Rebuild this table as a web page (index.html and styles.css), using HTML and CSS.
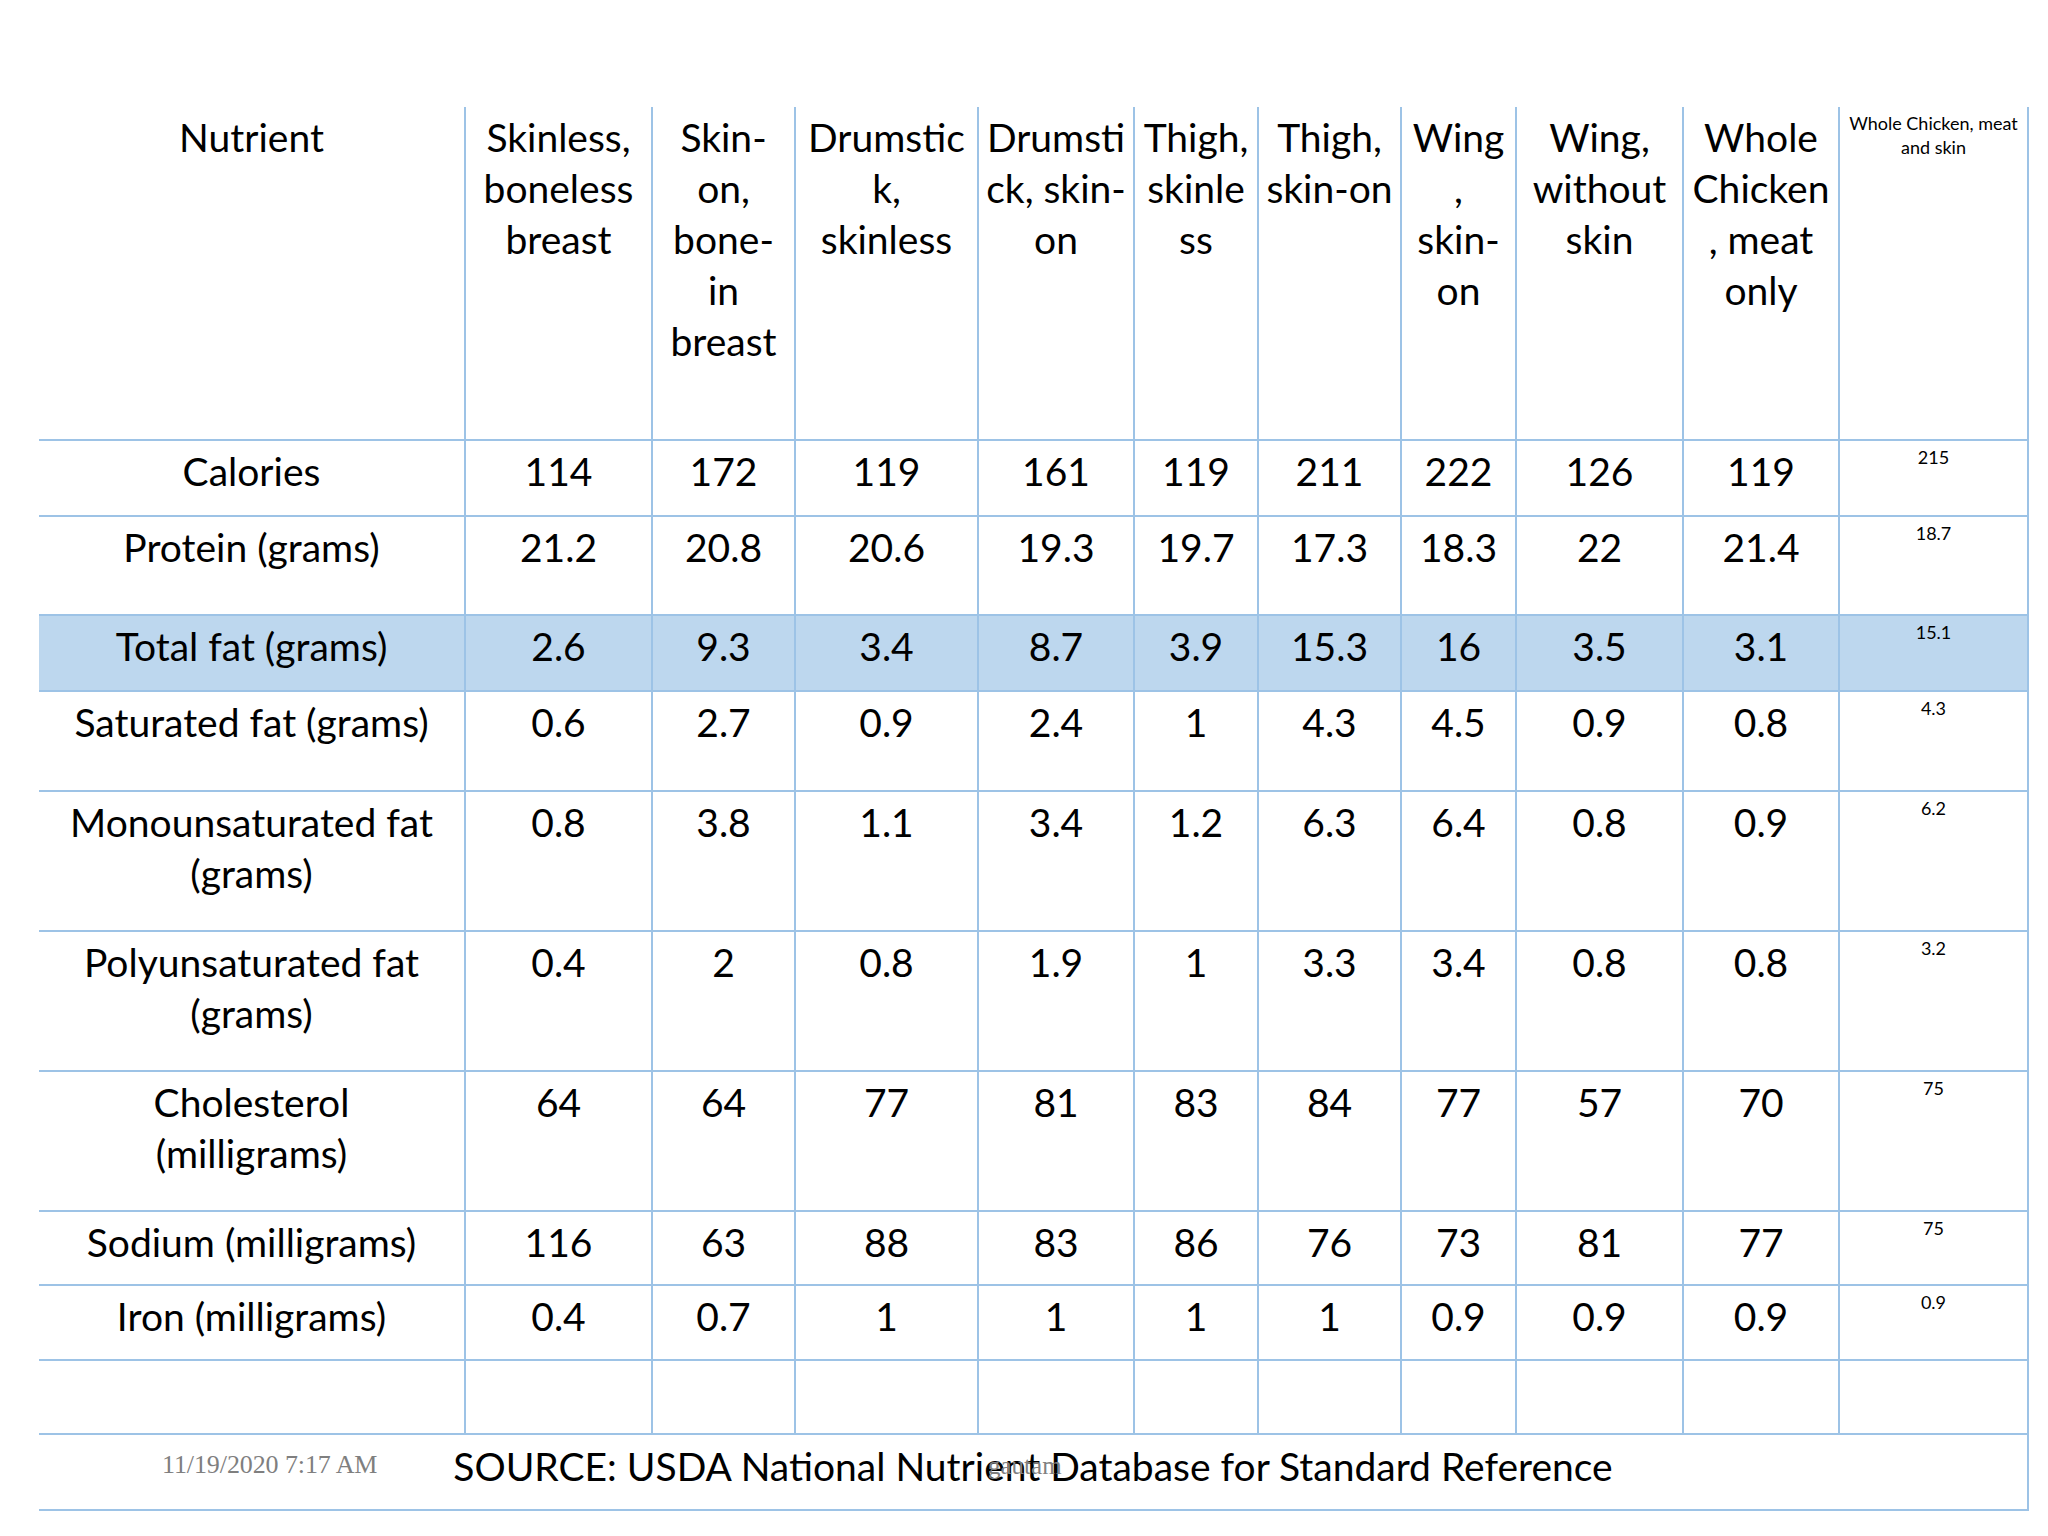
FILE: index.html
```html
<!DOCTYPE html>
<html lang="en">
<head>
<meta charset="utf-8">
<title>Chicken nutrient comparison</title>
<link rel="stylesheet" href="styles.css">
</head>
<body>
<div class="slide">
  <table class="nutri">
    <colgroup>
      <col class="c1"><col class="c2"><col class="c3"><col class="c4"><col class="c5"><col class="c6"><col class="c7"><col class="c8"><col class="c9"><col class="c10"><col class="c11">
    </colgroup>
    <thead>
      <tr class="r-head">
        <th>Nutrient</th>
        <th>Skinless,<br>boneless<br>breast</th>
        <th>Skin-<br>on,<br>bone-<br>in<br>breast</th>
        <th>Drumstic<br>k,<br>skinless</th>
        <th>Drumsti<br>ck, skin-<br>on</th>
        <th>Thigh,<br>skinle<br>ss</th>
        <th>Thigh,<br>skin-on</th>
        <th>Wing<br>,<br>skin-<br>on</th>
        <th>Wing,<br>without<br>skin</th>
        <th>Whole<br>Chicken<br>, meat<br>only</th>
        <th class="small">Whole Chicken, meat<br>and skin</th>
      </tr>
    </thead>
    <tbody>
      <tr class="r76">
        <td>Calories</td><td>114</td><td>172</td><td>119</td><td>161</td><td>119</td><td>211</td><td>222</td><td>126</td><td>119</td><td class="small">215</td>
      </tr>
      <tr class="r99">
        <td>Protein (grams)</td><td>21.2</td><td>20.8</td><td>20.6</td><td>19.3</td><td>19.7</td><td>17.3</td><td>18.3</td><td>22</td><td>21.4</td><td class="small">18.7</td>
      </tr>
      <tr class="r76 hl">
        <td>Total fat (grams)</td><td>2.6</td><td>9.3</td><td>3.4</td><td>8.7</td><td>3.9</td><td>15.3</td><td>16</td><td>3.5</td><td>3.1</td><td class="small">15.1</td>
      </tr>
      <tr class="r100">
        <td>Saturated fat (grams)</td><td>0.6</td><td>2.7</td><td>0.9</td><td>2.4</td><td>1</td><td>4.3</td><td>4.5</td><td>0.9</td><td>0.8</td><td class="small">4.3</td>
      </tr>
      <tr class="r140">
        <td>Monounsaturated fat<br>(grams)</td><td>0.8</td><td>3.8</td><td>1.1</td><td>3.4</td><td>1.2</td><td>6.3</td><td>6.4</td><td>0.8</td><td>0.9</td><td class="small">6.2</td>
      </tr>
      <tr class="r140">
        <td>Polyunsaturated fat<br>(grams)</td><td>0.4</td><td>2</td><td>0.8</td><td>1.9</td><td>1</td><td>3.3</td><td>3.4</td><td>0.8</td><td>0.8</td><td class="small">3.2</td>
      </tr>
      <tr class="r140">
        <td>Cholesterol<br>(milligrams)</td><td>64</td><td>64</td><td>77</td><td>81</td><td>83</td><td>84</td><td>77</td><td>57</td><td>70</td><td class="small">75</td>
      </tr>
      <tr class="r74">
        <td>Sodium (milligrams)</td><td>116</td><td>63</td><td>88</td><td>83</td><td>86</td><td>76</td><td>73</td><td>81</td><td>77</td><td class="small">75</td>
      </tr>
      <tr class="r75">
        <td>Iron (milligrams)</td><td>0.4</td><td>0.7</td><td>1</td><td>1</td><td>1</td><td>1</td><td>0.9</td><td>0.9</td><td>0.9</td><td class="small">0.9</td>
      </tr>
      <tr class="r74">
        <td></td><td></td><td></td><td></td><td></td><td></td><td></td><td></td><td></td><td></td><td></td>
      </tr>
    </tbody>
    <tfoot>
      <tr class="r76">
        <td class="source" colspan="11">SOURCE: USDA National Nutrient Database for Standard Reference</td>
      </tr>
    </tfoot>
  </table>
  <div class="stamp date">11/19/2020 7:17 AM</div>
  <div class="stamp author">gautam</div>
</div>
</body>
</html>
```

FILE: styles.css
```css
html, body {
  margin: 0;
  padding: 0;
  background: #ffffff;
}

.slide {
  position: relative;
  width: 2048px;
  height: 1536px;
  padding: 107px 0 0 39px;
  box-sizing: border-box;
  font-family: "Lato", "Carlito", "Liberation Sans", sans-serif;
  color: #000000;
}

.nutri {
  border-collapse: collapse;
  table-layout: fixed;
  width: 1989px;
}

.c1 { width: 426px; }
.c2 { width: 187px; }
.c3 { width: 143px; }
.c4 { width: 183px; }
.c5 { width: 156px; }
.c6 { width: 124px; }
.c7 { width: 143px; }
.c8 { width: 115px; }
.c9 { width: 167px; }
.c10 { width: 156px; }
.c11 { width: 189px; }

.nutri th,
.nutri td {
  font-weight: 400;
  font-size: 39px;
  line-height: 51px;
  text-align: center;
  vertical-align: top;
  padding: 5px 0 0 0;
  white-space: nowrap;
  border: 2px solid #9dc3e6;
  overflow: visible;
}

.nutri thead th {
  border-top: none;
}

.nutri th:first-child,
.nutri td:first-child {
  border-left: none;
}

.nutri .small {
  font-size: 18px;
  line-height: 23.5px;
  padding-top: 5px;
}

.r-head { height: 333px; }
.r74 { height: 74px; }
.r75 { height: 75px; }
.r76 { height: 76px; }
.r99 { height: 99px; }
.r100 { height: 100px; }
.r140 { height: 140px; }

.hl td {
  background: #bdd7ee;
}

.nutri .source {
  vertical-align: middle;
  padding: 0 0 12px 0;
  line-height: 51px;
}

.stamp {
  position: absolute;
  font-family: "Liberation Serif", "Times New Roman", serif;
  color: #7f7f7f;
}

.date {
  left: 162px;
  top: 1450px;
  font-size: 26px;
  line-height: 30px;
  letter-spacing: -0.1px;
}

.author {
  left: 988px;
  top: 1452px;
  font-size: 25px;
  line-height: 28px;
  color: #808080;
}
```
